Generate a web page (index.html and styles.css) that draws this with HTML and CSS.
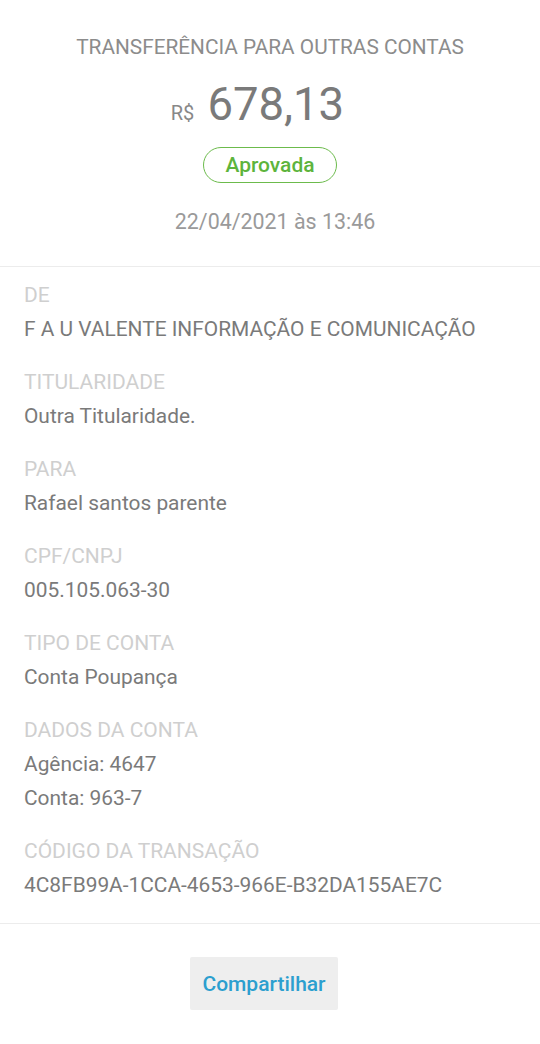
FILE: index.html
```html
<!doctype html>
<html>
  <head>
    <meta charset="utf-8">
    <link rel="stylesheet" href="styles.css">
  </head>
  <body>
    <div class="receipt-head">
      <div class="title">TRANSFERÊNCIA PARA OUTRAS CONTAS</div>
      <div class="amount"><span class="currency">R$</span><span class="value">678,13</span></div>
      <div class="status">Aprovada</div>
      <div class="date">22/04/2021 às 13:46</div>
    </div>

    <div class="details">
      <div class="item">
        <div class="label">DE</div>
        <div class="text">F A U VALENTE INFORMAÇÃO E COMUNICAÇÃO</div>
      </div>
      <div class="item">
        <div class="label">TITULARIDADE</div>
        <div class="text">Outra Titularidade.</div>
      </div>
      <div class="item">
        <div class="label">PARA</div>
        <div class="text">Rafael santos parente</div>
      </div>
      <div class="item">
        <div class="label">CPF/CNPJ</div>
        <div class="text">005.105.063-30</div>
      </div>
      <div class="item">
        <div class="label">TIPO DE CONTA</div>
        <div class="text">Conta Poupança</div>
      </div>
      <div class="item">
        <div class="label">DADOS DA CONTA</div>
        <div class="text">Agência: 4647</div>
        <div class="text">Conta: 963-7</div>
      </div>
      <div class="item">
        <div class="label">CÓDIGO DA TRANSAÇÃO</div>
        <div class="text">4C8FB99A-1CCA-4653-966E-B32DA155AE7C</div>
      </div>
    </div>

    <div class="actions">
      <button class="share">Compartilhar</button>
    </div>
  </body>
</html>
```

FILE: styles.css
```css
body {
  margin: 0;
  font-family: Roboto, "Noto Sans", sans-serif;
  background-color: #fff;
  color: #777;
}

.receipt-head {
  display: flex;
  flex-direction: column;
  align-items: center;
  padding: 35px 0 32px;
  border-bottom: 1px solid #ececec;
}

.title {
  font-size: 20.8px;
  line-height: 24px;
  color: #8c8c8c;
}

.amount {
  margin-top: 23px;
  margin-right: 25px;
  height: 49px;
  line-height: 49px;
  white-space: nowrap;
}

.currency {
  margin-right: 13px;
  font-size: 20px;
  line-height: 1;
  color: #888;
}

.value {
  font-size: 45.5px;
  line-height: 1;
  color: #7a7a7a;
}

.status {
  margin-top: 16px;
  box-sizing: border-box;
  height: 36px;
  padding: 0 21px;
  border: 1px solid #6cbb4c;
  border-radius: 18px;
  font-size: 21px;
  font-weight: 500;
  line-height: 34px;
  color: #5db43c;
}

.date {
  margin-top: 27px;
  margin-left: 10px;
  font-size: 21.4px;
  line-height: 24px;
  color: #9a9a9a;
}

.details {
  padding: 16px 24px 26px;
  border-bottom: 1px solid #ececec;
}

.item {
  margin-bottom: 29px;
}

.item:last-child {
  margin-bottom: 0;
}

.label {
  font-size: 21px;
  line-height: 24px;
  color: #cfcfcf;
}

.text {
  margin-top: 10px;
  font-size: 20.9px;
  line-height: 24px;
  color: #7a7a7a;
}

.actions {
  display: flex;
  justify-content: center;
  padding-top: 33px;
}

.share {
  height: 53px;
  margin-right: 12px;
  padding: 0 12px;
  border: none;
  border-radius: 2px;
  background-color: #eeeeee;
  font-family: Roboto, sans-serif;
  font-size: 21px;
  font-weight: 500;
  color: #2c9fcf;
}
```
